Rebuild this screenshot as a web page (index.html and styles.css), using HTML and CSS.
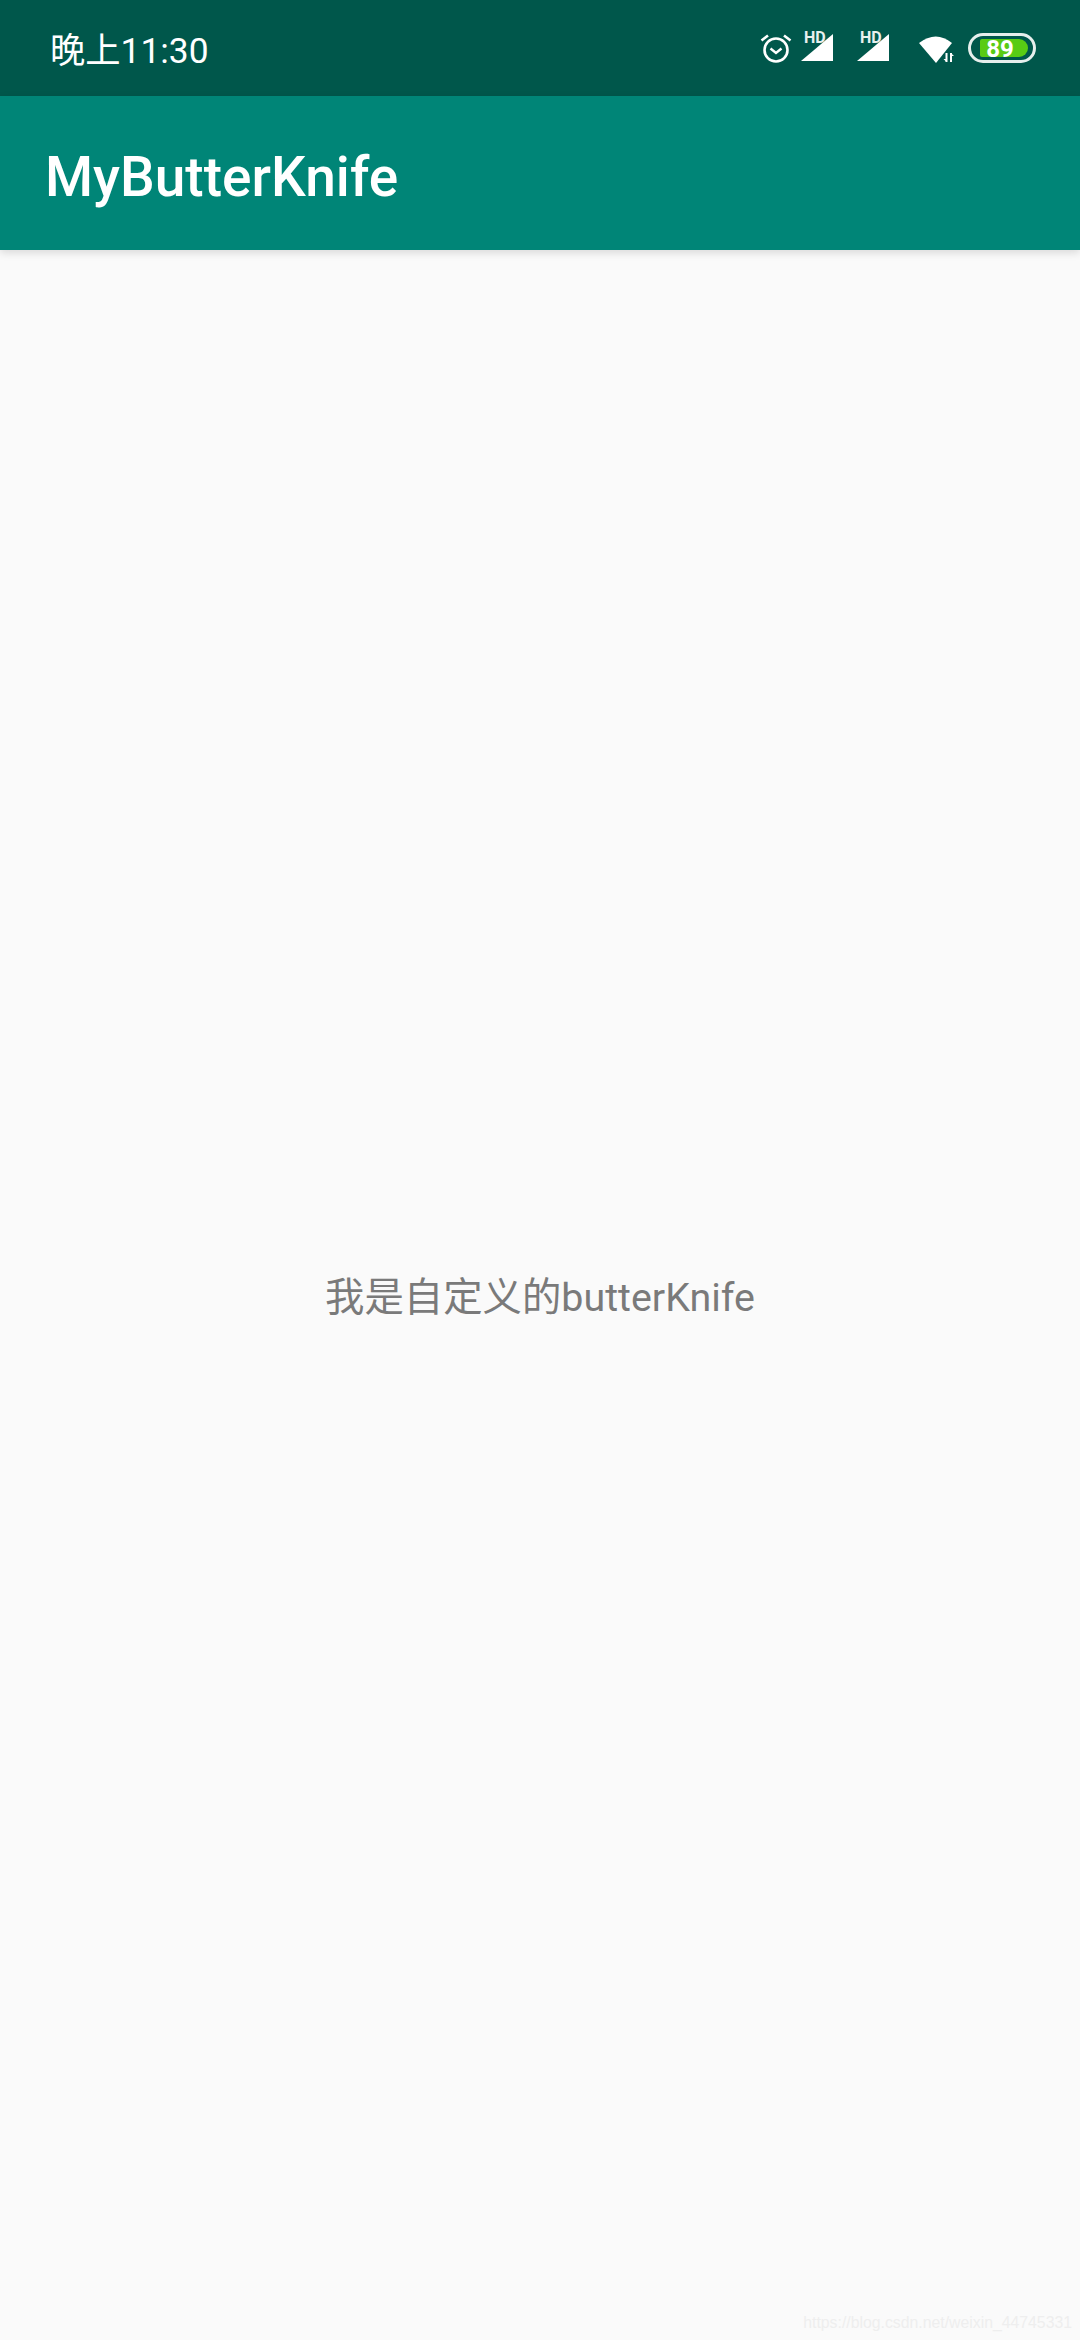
FILE: index.html
```html
<!DOCTYPE html>
<html lang="en">
<head>
    <meta charset="UTF-8">
    <meta name="viewport" content="width=device-width, initial-scale=1.0">
    <title>MyButterKnife</title>
    <link rel="stylesheet" href="styles.css">
</head>
<body>

    <div class="status-bar">
        <span class="clock">晚上11:30</span>
        <div class="status-icons">
            <svg class="icon-alarm" width="32" height="32" viewBox="0 0 32 32">
                <circle cx="16" cy="18" r="11.5" fill="none" stroke="#fff" stroke-width="2.6"/>
                <path d="M10.5 16.5l5.5 4.5 5.5-4.500" fill="none" stroke="#fff" stroke-width="2.4"/>
                <path d="M1.500 8.500L8 3.500M30.500 8.500L24 3.500" fill="none" stroke="#fff" stroke-width="2.6"/>
            </svg>
            <svg class="icon-signal" width="33" height="40" viewBox="0 0 33 40">
                <path d="M0 33L32 6V33Z" fill="#fff"/>
                <text x="3" y="15" class="hd">HD</text>
            </svg>
            <svg class="icon-signal second" width="33" height="40" viewBox="0 0 33 40">
                <path d="M0 33L32 6V33Z" fill="#fff"/>
                <text x="3" y="15" class="hd">HD</text>
            </svg>
            <svg class="icon-wifi" width="35" height="32" viewBox="0 0 35 32">
                <path d="M0 11Q17-2 33 11L17 31Z" fill="#fff"/>
                <path d="M27.500 21V30M32 21V30" stroke="#fff" stroke-width="2" fill="none"/>
                <path d="M24.500 27H27.500V30ZM32 21V24H35Z" fill="#fff"/>
            </svg>
            <div class="battery">
                <div class="battery-level">89</div>
            </div>
        </div>
    </div>

    <div class="app-bar">MyButterKnife</div>

    <div class="content">
        <p class="message">我是自定义的butterKnife</p>
        <span class="watermark">https://blog.csdn.net/weixin_44745331</span>
    </div>

</body>
</html>
```

FILE: styles.css
```css
* { box-sizing: border-box; margin: 0; padding: 0; }
body {
    width: 1080px;
    height: 2340px;
    display: flex;
    flex-direction: column;
    overflow: hidden;
    font-family: Roboto, "Noto Sans CJK SC", sans-serif;
    background: #fafafa;
}

.status-bar {
    height: 96px;
    display: flex;
    align-items: center;
    justify-content: space-between;
    padding: 0 44px 0 50px;
    background: #00574b;
    color: #fff;
}

.clock { font-size: 35.3px; line-height: 96px; padding-top: 5px; }

.status-icons { display: flex; align-items: center; }
.status-icons svg { display: block; }

.icon-alarm { margin-right: 9px; }
.icon-signal.second { margin-left: 23px; }
.icon-wifi { margin-left: 29px; }

.hd {
    font-family: Roboto, sans-serif;
    font-size: 16px;
    font-weight: 700;
    fill: #e8f0ee;
}

.battery {
    width: 68px;
    height: 30px;
    margin-left: 14px;
    padding: 3px 5px 3px 9px;
    border: 3px solid #e6efed;
    border-radius: 15px;
}

.battery-level {
    height: 100%;
    padding-right: 8px;
    background: #59cb14;
    border-radius: 2px 9px 9px 2px;
    color: #fff;
    font-size: 24px;
    font-weight: 700;
    line-height: 20px;
    text-align: center;
}

.app-bar {
    height: 154px;
    display: flex;
    align-items: center;
    padding: 7px 0 0 45px;
    background: #008577;
    color: #fff;
    font-size: 55px;
    font-weight: 500;
    box-shadow: 0 3px 8px rgba(0, 0, 0, 0.13);
    position: relative;
}

.content {
    flex: 1;
    position: relative;
    display: flex;
    justify-content: center;
    padding-top: 1020px;
}

.message {
    font-size: 39.4px;
    line-height: 56px;
    color: #7a7a7a;
    height: 56px;
}

.watermark {
    position: absolute;
    right: 8px;
    bottom: 8px;
    font-family: "Liberation Sans", sans-serif;
    font-size: 15.8px;
    color: #eeeeee;
}
```
